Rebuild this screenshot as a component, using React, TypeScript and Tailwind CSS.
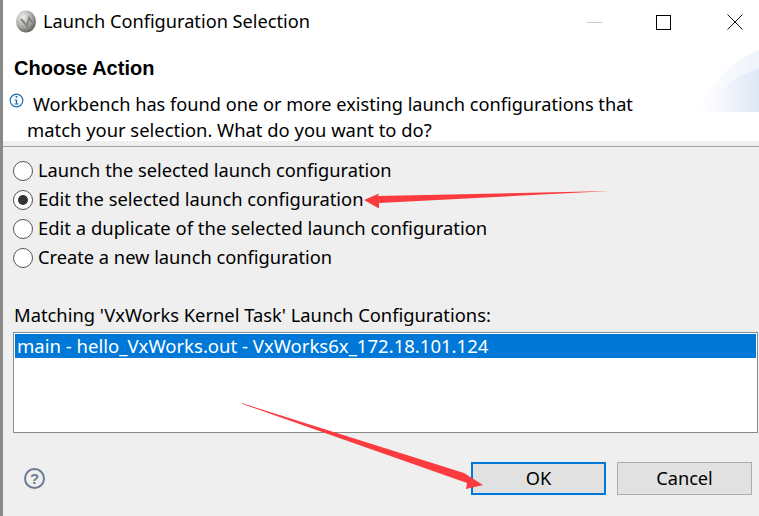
import React from 'react';

const options = [
  { label: 'Launch the selected launch configuration', checked: false, size: 'text-[18.25px]' },
  { label: 'Edit the selected launch configuration', checked: true, size: 'text-[18.35px]' },
  { label: 'Edit a duplicate of the selected launch configuration', checked: false, size: 'text-[18.45px]' },
  { label: 'Create a new launch configuration', checked: false, size: 'text-[18.25px]' },
];

const Radio: React.FC<{ checked: boolean }> = ({ checked }) => (
  <span className="flex h-[20px] w-[20px] shrink-0 items-center justify-center rounded-full border border-[#555] bg-white">
    {checked && <span className="h-[10px] w-[10px] rounded-full bg-[#333]" />}
  </span>
);

const App: React.FC = () => {
  return (
    <div className="relative flex h-[516px] w-[759px] flex-col overflow-hidden border-l-[3px] border-[#8a8a8a] bg-[#efefef] font-['Noto_Sans',sans-serif] text-[18.2px] text-black">
      {/* Title bar */}
      <div className="flex h-[44px] shrink-0 items-center bg-white pl-[12px]">
        <svg width="24" height="24" viewBox="0 0 24 24" className="mr-[4px]">
          <defs>
            <radialGradient id="ball" cx="35%" cy="30%" r="75%">
              <stop offset="0%" stopColor="#efefef" />
              <stop offset="60%" stopColor="#a8a8a4" />
              <stop offset="100%" stopColor="#5c5c56" />
            </radialGradient>
          </defs>
          <ellipse cx="11" cy="11.500" rx="10" ry="11" fill="url(#ball)" />
          <path d="M6 9l6 7 2-8 3 4" fill="none" stroke="#85857f" strokeWidth="2" />
        </svg>
        <span className="-mt-[1px] leading-none">Launch Configuration Selection</span>
        <div className="ml-auto flex items-center">
          <span className="mr-[54px] h-px w-[15px] bg-[#c8c8c8]" />
          <span className="mr-[56px] h-[15px] w-[15px] border border-black" />
          <svg width="16" height="16" viewBox="0 0 16 16" className="mr-[16px]">
            <path d="M.5.5l15 15M15.500.5l-15 15" stroke="#111" strokeWidth="1" fill="none" />
          </svg>
        </div>
      </div>

      {/* Banner */}
      <div className="relative h-[97px] shrink-0 bg-white">
        <div className="pl-[11px] font-['Liberation_Sans',sans-serif] text-[20px] font-bold leading-[48px]">
          Choose Action
        </div>
        <div className="flex pl-[6px] leading-[25px]">
          <svg width="15" height="15" viewBox="0 0 15 15" className="mt-[1px] shrink-0">
            <circle cx="7.500" cy="7.500" r="6.300" fill="#fff" stroke="#1f6fb4" strokeWidth="1.200" />
            <rect x="6.600" y="3" width="1.800" height="1.800" fill="#1f6fb4" />
            <path d="M5.500 6.500h2.700v4h1.300v1h-4v-1h1.300v-3h-1.300z" fill="#1f6fb4" />
          </svg>
          <p className="ml-[3px] indent-[6px]">
            Workbench has found one or more existing launch configurations that
            <br />
            <span className="text-[18.4px]">match your selection. What do you want to do?</span>
          </p>
        </div>
        <svg width="64" height="66" viewBox="0 0 64 66" className="absolute right-0 top-[2px]">
          <defs>
            <linearGradient id="fade" x1="0" x2="1" y1="0" y2="0">
              <stop offset="0%" stopColor="#ffffff" />
              <stop offset="100%" stopColor="#dfe7f6" />
            </linearGradient>
          </defs>
          <path d="M0 66C14 40 36 14 64 4V66z" fill="url(#fade)" opacity="0.5" />
          <path d="M8 66C22 44 42 28 64 23V66z" fill="url(#fade)" />
        </svg>
      </div>

      {/* Separator */}
      <div className="mt-[5px] h-px shrink-0 bg-[#a0a0a0]" />

      {/* Options */}
      <div className="mt-[9px] flex flex-col px-[10px]">
        {options.map((o) => (
          <label key={o.label} className={`flex h-[29px] items-center gap-[5px] leading-none ${o.size}`}>
            <Radio checked={o.checked} />
            <span>{o.label}</span>
          </label>
        ))}
      </div>

      {/* Matching list */}
      <div className="mt-[31px] pl-[11px] text-[18.35px] leading-[24px]">
        Matching 'VxWorks Kernel Task' Launch Configurations:
      </div>
      <div className="ml-[10px] mr-px mt-[5px] h-[101px] border border-[#8a8a8a] bg-white p-px">
        <div className="flex h-[24px] items-center bg-[#0078d7] pl-[2px] text-[18.55px] text-white">
          main - hello_VxWorks.out - VxWorks6x_172.18.101.124
        </div>
      </div>

      {/* Footer */}
      <div className="mt-[29px] flex items-center pl-[21px] pr-[7px]">
        <span className="flex h-[21px] w-[21px] items-center justify-center rounded-full border-2 border-[#6d7b94] font-['Liberation_Sans',sans-serif] text-[15px] font-bold leading-none text-[#6d7b94]">
          ?
        </span>
        <button className="ml-auto h-[33px] w-[135px] border-2 border-[#0078d7] bg-[#e1e1e1]">OK</button>
        <button className="ml-[11px] h-[33px] w-[135px] border border-[#adadad] bg-[#e1e1e1]">Cancel</button>
      </div>

      {/* Red annotation arrows */}
      <svg width="759" height="516" viewBox="0 0 759 516" className="pointer-events-none absolute left-[-3px] top-0">
        <path d="M364 200L379 193.500L378 196L610 191L379 203L379 208.500z" fill="#fb3b3f" />
        <path d="M241 403.500L243 403.500L464 473L483 485L466 489L467 483z" fill="#fb3b3f" />
      </svg>
    </div>
  );
};

export default App;
